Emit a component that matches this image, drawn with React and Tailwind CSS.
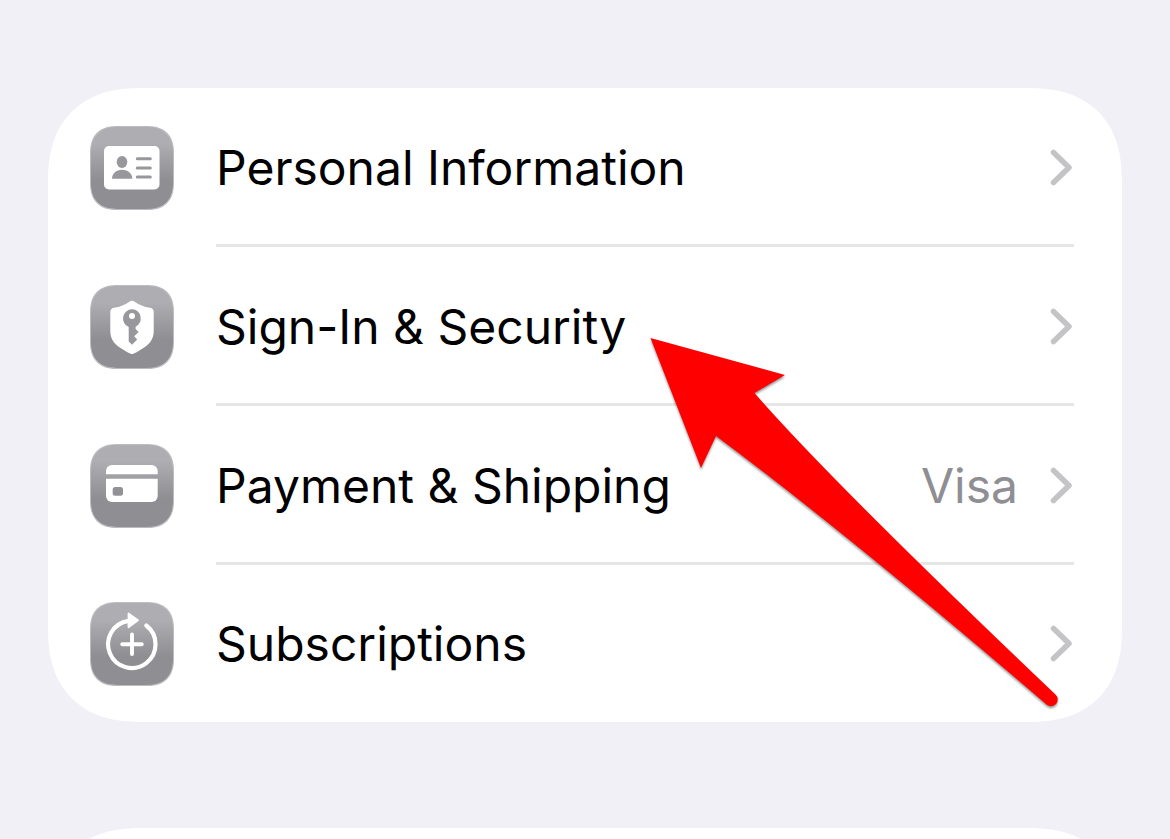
const items = [
  { label: "Personal Information", icon: IdCardIcon },
  { label: "Sign-In & Security", icon: KeyShieldIcon },
  { label: "Payment & Shipping", icon: CreditCardIcon, detail: "Visa" },
  { label: "Subscriptions", icon: RenewIcon },
];

// smooth corners where the browser can draw them, plain rounding otherwise
const cardCorners =
  "rounded-[78px] supports-[corner-shape:squircle]:rounded-[94px] supports-[corner-shape:squircle]:[corner-shape:superellipse(1.25)]";
const tileCorners =
  "rounded-[22px] supports-[corner-shape:squircle]:rounded-[28px] supports-[corner-shape:squircle]:[corner-shape:superellipse(1.3)]";

function IdCardIcon() {
  return (
    <>
      <rect x="14" y="20" width="55.5" height="43.5" rx="5" fill="#fff" />
      <ellipse cx="32" cy="36" rx="5.3" ry="5.9" fill="#97979c" />
      <path d="M22 52.7c0-5 4-9 10.1-9s10.2 4 10.2 9z" fill="#97979c" />
      <path d="M47.3 32.7h13M47.3 42h13M47.3 51h13" stroke="#97979c" strokeWidth="3" strokeLinecap="round" />
    </>
  );
}

function KeyShieldIcon() {
  return (
    <>
      <path
        d="M42 15.7c-1 0-2 .5-3 1.2-4 2.8-9 4.8-15 5.9-2.6.5-3.7 2-3.7 4.2V46c0 9 4.7 14 12.7 18.5 3 1.7 7 4.5 9 4.5s6-2.8 9-4.5C59 60 63.7 55 63.7 46V27c0-2.2-1.1-3.7-3.7-4.2-6-1.1-11-3.1-15-5.9-1-.7-2-1.2-3-1.2z"
        fill="#fff"
      />
      <path
        fillRule="evenodd"
        d="M42 24.3a9.2 9.2 0 0 0-3.3 17.7V56.5l3.3 3.2 5.2-5.2-3-3.2 4.4-4.2-3-3.1V41.7A9.2 9.2 0 0 0 42 24.3zM42 28a3 3 0 1 1 0 6 3 3 0 0 1 0-6z"
        fill="#97979c"
      />
    </>
  );
}

function CreditCardIcon() {
  return (
    <>
      <path d="M16 30.3V27a6 6 0 0 1 6-6h39.7a6 6 0 0 1 6 6v3.3z" fill="#fff" />
      <path d="M16 34.7h51.7V52a6 6 0 0 1-6 6H22a6 6 0 0 1-6-6z" fill="#fff" />
      <rect x="22.7" y="43" width="10.3" height="8.7" rx="2.5" fill="#919196" />
    </>
  );
}

function RenewIcon() {
  return (
    <>
      <path d="M56.3 23.5A23.7 23.7 0 1 1 38.5 18.8" fill="none" stroke="#fff" strokeWidth="4.2" strokeLinecap="round" />
      <path d="M38.5 11.5 48 18.3 38.5 25.3z" fill="#fff" stroke="#fff" strokeWidth="1.8" strokeLinejoin="round" />
      <path d="M42 32.5V52M32.2 42.2h19.6" stroke="#fff" strokeWidth="3.9" strokeLinecap="round" />
    </>
  );
}

function Chevron() {
  return (
    <svg viewBox="0 0 24 40" className="h-10 w-6 shrink-0" fill="none" aria-hidden="true">
      <path d="M3.5 4.5 19 19.5 3.5 34.5" stroke="#c4c4c6" strokeWidth="5.5" strokeLinecap="round" strokeLinejoin="round" />
    </svg>
  );
}

function Row({ item, last }) {
  const Icon = item.icon;
  return (
    <li>
      <a
        href="#"
        className={`flex items-center gap-[42px] pr-12 pl-[42px] ${last ? "h-[157px]" : "h-[159px]"}`}
      >
        <span
          className={`size-[84px] shrink-0 border border-[#bcbcc0] bg-linear-to-b from-[#aeaeb2] from-20% to-[#8e8e93] to-65% ${tileCorners}`}
        >
          <svg viewBox="1 1 82 82" className="size-full" aria-hidden="true">
            <Icon />
          </svg>
        </span>
        <span
          className={`flex h-full flex-1 items-center gap-8 border-b-3 pt-1 ${
            last ? "border-transparent" : "border-[#e6e6e7]"
          }`}
        >
          <span className="flex-1 whitespace-nowrap">{item.label}</span>
          {item.detail && <span className="text-[#8e8e93]">{item.detail}</span>}
          <Chevron />
        </span>
      </a>
    </li>
  );
}

function Arrow() {
  return (
    <svg
      viewBox="640 330 440 390"
      className="pointer-events-none absolute top-[330px] left-[640px] w-[440px] drop-shadow-[0_2px_1px_rgba(0,0,0,0.4)]"
      aria-hidden="true"
    >
      <path
        d="M650.5 338 785 375 754.5 393Q830 480 1055.5 694.5A6.5 6.5 0 0 1 1046.5 704.5Q850 536 716 436L701 468z"
        fill="#f00"
      />
    </svg>
  );
}

export default function App() {
  return (
    <main className="relative flex h-screen flex-col gap-[106px] overflow-hidden bg-[#f1f0f6] px-12 pt-[88px] font-[Inter,sans-serif] text-5xl leading-none text-black">
      <ul className={`shrink-0 bg-white ${cardCorners}`}>
        {items.map((item, i) => (
          <Row key={item.label} item={item} last={i === items.length - 1} />
        ))}
      </ul>
      <section className={`h-[240px] shrink-0 bg-white ${cardCorners}`} />
      <Arrow />
    </main>
  );
}
